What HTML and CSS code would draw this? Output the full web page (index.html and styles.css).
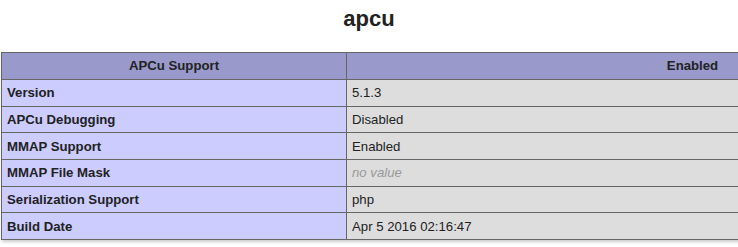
FILE: index.html
```html
<!DOCTYPE html>
<html>
<head>
<meta charset="utf-8">
<title>apcu</title>
<link rel="stylesheet" href="styles.css">
</head>
<body>
<div class="page">
  <h2 class="title">apcu</h2>
  <table class="info">
    <tr class="h"><th class="c1">APCu Support</th><th class="c2">Enabled</th></tr>
    <tr><td class="e">Version</td><td class="v">5.1.3</td></tr>
    <tr><td class="e">APCu Debugging</td><td class="v">Disabled</td></tr>
    <tr><td class="e">MMAP Support</td><td class="v">Enabled</td></tr>
    <tr><td class="e">MMAP File Mask</td><td class="v"><i class="nv">no value</i></td></tr>
    <tr><td class="e">Serialization Support</td><td class="v">php</td></tr>
    <tr><td class="e">Build Date</td><td class="v">Apr 5 2016 02:16:47</td></tr>
  </table>
</div>
</body>
</html>
```

FILE: styles.css
```css
html, body {
  margin: 0;
  padding: 0;
  background: #fff;
}
.page {
  width: 738px;
  height: 247px;
  overflow: hidden;
  color: #222;
  font-family: "Liberation Sans", Arial, sans-serif;
}
.title {
  margin: 6px 0 20px;
  font-size: 22px;
  line-height: 26px;
  font-weight: bold;
  text-align: center;
}
.info {
  margin-left: 1px;
  width: 1038px;
  table-layout: fixed;
  border-collapse: separate;
  border-spacing: 0;
  border-left: 1px solid #666;
  border-top: 1px solid #666;
  box-shadow: 1px 2px 3px #ccc;
  font-size: 13.2px;
}
.info th, .info td {
  box-sizing: border-box;
  border-right: 1px solid #666;
  border-bottom: 1px solid #666;
  padding: 5.25px 5px;
  line-height: 15.17px;
  vertical-align: baseline;
  text-align: left;
}
.info th {
  padding-top: 5.4px;
  padding-bottom: 5.4px;
}
.c1 {
  width: 345px;
}
.h th {
  background: #99c;
  font-weight: bold;
  text-align: center;
}
.e {
  background: #ccf;
  font-weight: bold;
}
.v {
  background: #ddd;
}
.nv {
  color: #999;
}
```
